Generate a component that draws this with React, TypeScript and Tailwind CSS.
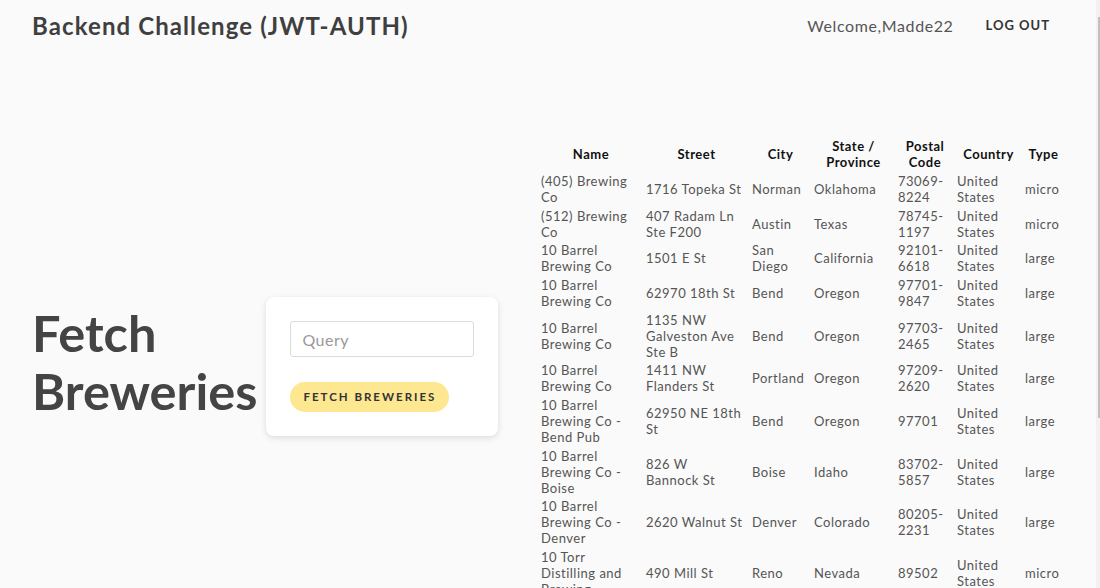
const rows: string[][] = [
    ["(405) Brewing\nCo", "1716 Topeka St", "Norman", "Oklahoma", "73069-\n8224", "United\nStates", "micro"],
    ["(512) Brewing\nCo", "407 Radam Ln\nSte F200", "Austin", "Texas", "78745-\n1197", "United\nStates", "micro"],
    ["10 Barrel\nBrewing Co", "1501 E St", "San\nDiego", "California", "92101-\n6618", "United\nStates", "large"],
    ["10 Barrel\nBrewing Co", "62970 18th St", "Bend", "Oregon", "97701-\n9847", "United\nStates", "large"],
    ["10 Barrel\nBrewing Co", "1135 NW\nGalveston Ave\nSte B", "Bend", "Oregon", "97703-\n2465", "United\nStates", "large"],
    ["10 Barrel\nBrewing Co", "1411 NW\nFlanders St", "Portland", "Oregon", "97209-\n2620", "United\nStates", "large"],
    ["10 Barrel\nBrewing Co -\nBend Pub", "62950 NE 18th\nSt", "Bend", "Oregon", "97701", "United\nStates", "large"],
    ["10 Barrel\nBrewing Co -\nBoise", "826 W\nBannock St", "Boise", "Idaho", "83702-\n5857", "United\nStates", "large"],
    ["10 Barrel\nBrewing Co -\nDenver", "2620 Walnut St", "Denver", "Colorado", "80205-\n2231", "United\nStates", "large"],
    ["10 Torr\nDistilling and\nBrewing", "490 Mill St", "Reno", "Nevada", "89502", "United\nStates", "micro"],
];

const headers = ["Name", "Street", "City", "State /\nProvince", "Postal\nCode", "Country", "Type"];
const widths = ["w-[105px]", "w-[106px]", "w-[62px]", "w-[84px]", "w-[59px]", "w-[68px]", "w-[42px]"];

const App = () => {
    return (
        <div className="flex h-[588px] overflow-hidden bg-[#fafafa] font-['Lato',sans-serif] text-[#444]">
            <div className="flex-1 flex flex-col">
                <header className="h-[52px] shrink-0 flex items-center justify-between pl-[32px] pr-[46px]">
                    <h1 className="text-[24px] font-bold tracking-[1.1px] text-[#3f3f3f]">Backend Challenge (JWT-AUTH)</h1>
                    <div className="flex items-center gap-[32px]">
                        <span className="text-[16px] tracking-[0.6px] text-[#555]">Welcome,Madde22</span>
                        <button className="text-[13px] font-bold tracking-[1px] text-[#333]">LOG OUT</button>
                    </div>
                </header>
                <main className="flex items-start pl-[32px]">
                    <div className="w-[504px] shrink-0 flex items-center gap-[9px] mt-[245px]">
                        <h2 className="mb-[10px] text-[50.5px] leading-[58px] font-bold text-[#444]">Fetch<br />Breweries</h2>
                        <div className="w-[232px] bg-white rounded-lg shadow-[0_2px_6px_rgba(0,0,0,0.12)] p-[24px]">
                            <input
                                className="w-[184px] h-[36px] border border-[#dcdcdc] rounded-[3px] px-[11px] text-[16px] tracking-[0.5px] outline-none placeholder:text-[#999]"
                                placeholder="Query"
                            />
                            <button className="mt-[25px] h-[30px] px-[13px] rounded-full bg-[#fde791] text-[11.5px] font-bold tracking-[2px] text-[#333]">
                                FETCH BREWERIES
                            </button>
                        </div>
                    </div>
                    <table className="mt-[85px] table-fixed text-[13px] leading-[16px] tracking-[0.5px]">
                        <thead>
                            <tr>
                                {headers.map((h, i) => (
                                    <th key={h} className={`${widths[i]} pl-[5px] py-[1.33px] text-center font-bold text-[#111] whitespace-pre-line`}>{h}</th>
                                ))}
                            </tr>
                        </thead>
                        <tbody>
                            {rows.map((r, i) => (
                                <tr key={i}>
                                    {r.map((c, j) => (
                                        <td key={j} className="pl-[5px] py-[1.33px] text-left text-[#555] whitespace-pre-line">{c}</td>
                                    ))}
                                </tr>
                            ))}
                        </tbody>
                    </table>
                </main>
            </div>
            <div className="w-[4px] bg-[#f1f1f1] flex justify-end">
                <div className="w-[2px] h-[401px] mt-[17px] bg-[#c1c1c1]"></div>
            </div>
        </div>
    );
};

export default App;
